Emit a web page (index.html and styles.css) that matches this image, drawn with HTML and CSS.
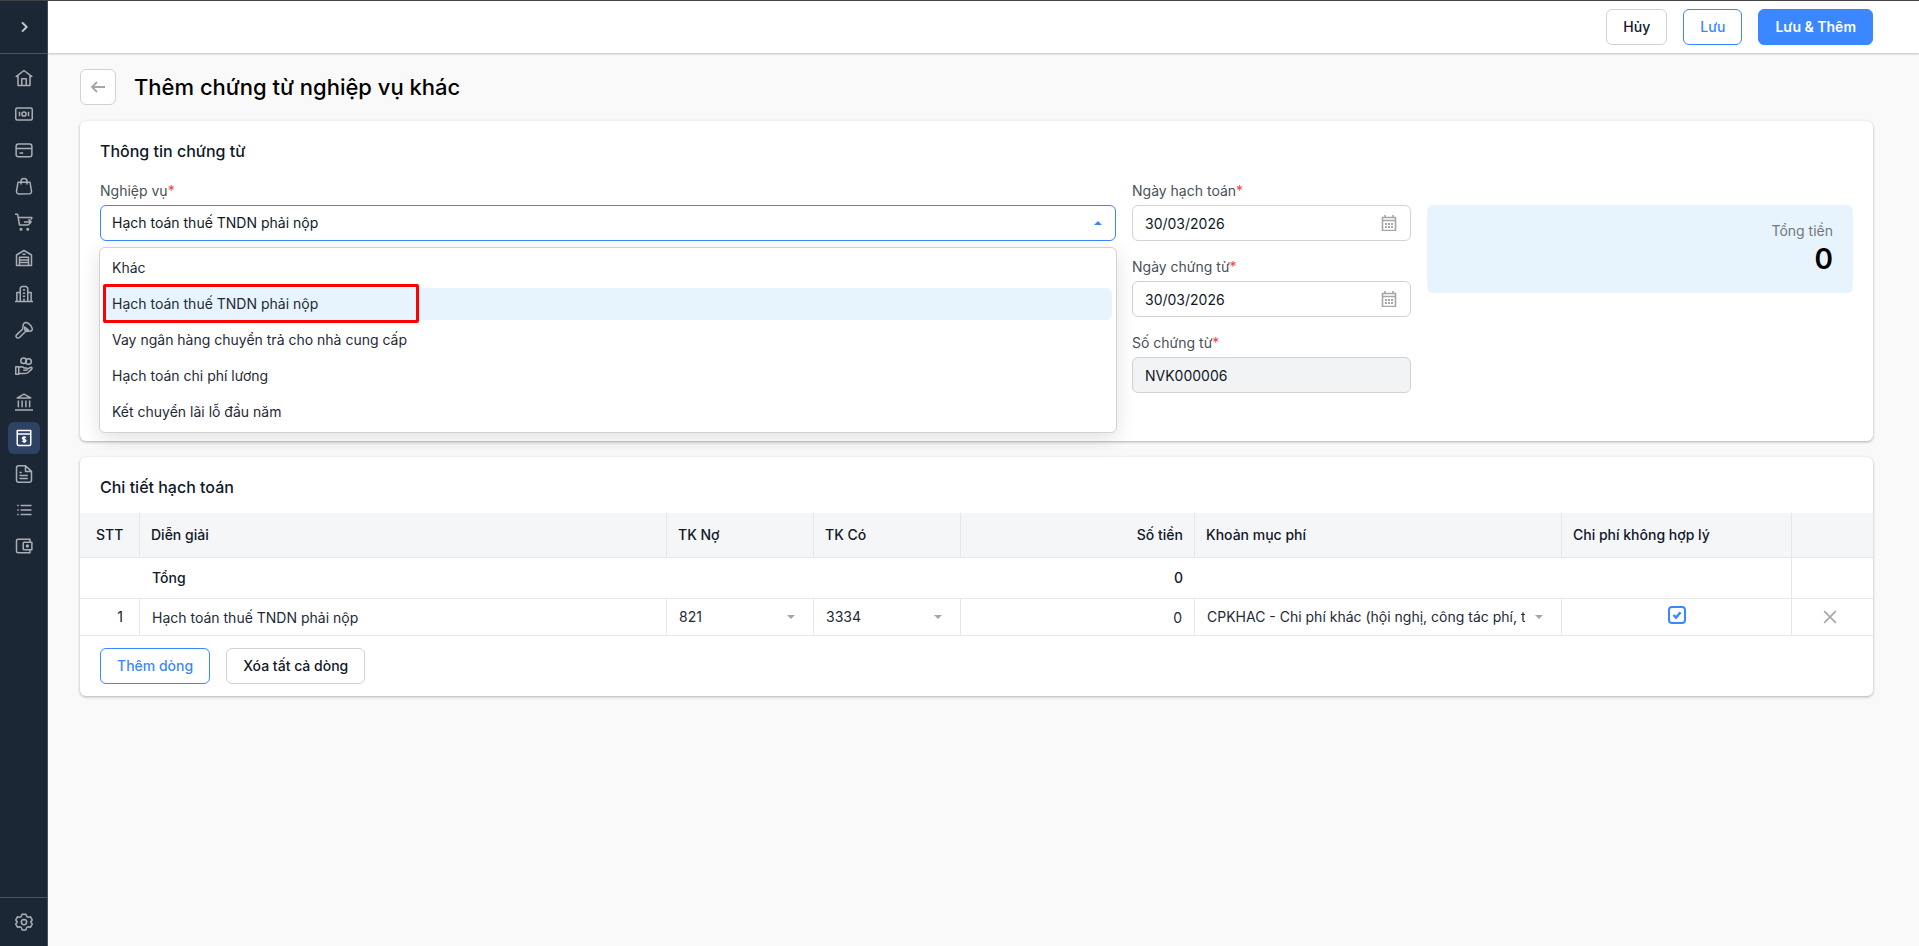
FILE: index.html
```
<!DOCTYPE html>
<html lang="vi">
<head>
  <meta charset="UTF-8">
  <title>Thêm chứng từ nghiệp vụ khác</title>
  <meta name="viewport" content="width=device-width, initial-scale=1.0">
  <link rel="stylesheet" href="styles.css">
</head>
<body>

<svg class="defs" aria-hidden="true">
  <symbol id="i-caret" viewBox="0 0 8 4"><path d="M0 0h8L4 4z" fill="currentColor"/></symbol>
  <symbol id="i-calendar" viewBox="0 0 16 16">
    <path d="M1.5 2.5h13v13h-13zM1.5 5.5h13" fill="none" stroke="currentColor" stroke-width="1.6"/>
    <path d="M4 0v3M12 0v3" stroke="currentColor" stroke-width="1.6"/>
    <path d="M4 8h2v2H4zM7 8h2v2H7zM10 8h2v2h-2zM4 11h2v2H4zM7 11h2v2H7zM10 11h2v2h-2z" fill="currentColor"/>
  </symbol>
</svg>

<aside class="sidebar">
  <button class="toggle" type="button" aria-label="Mở rộng menu">
    <svg class="icon" viewBox="0 0 24 24"><path d="M9 5l7 7-7 7" stroke-width="3"/></svg>
  </button>

  <nav class="nav">
    <a href="#" aria-label="Tổng quan"><svg class="icon" viewBox="0 0 24 24"><path d="M1 10.500L12 2l11 8.500M4 8.500V22h16V8.500M9 22v-9h6v9"/></svg></a>
    <a href="#" aria-label="Tiền mặt"><svg class="icon" viewBox="0 0 24 24"><rect x="1" y="4" width="22" height="16" rx="2"/><circle cx="12" cy="12" r="2.800"/><path d="M6 9v6M18 9v6"/></svg></a>
    <a href="#" aria-label="Ngân hàng"><svg class="icon" viewBox="0 0 24 24"><rect x="1.500" y="4" width="21" height="17" rx="3"/><path d="M2 10h20M6 16h5"/></svg></a>
    <a href="#" aria-label="Bán hàng"><svg class="icon" viewBox="0 0 24 24"><path d="M4 7h16l2 12a3 3 0 0 1-3 3.500H5A3 3 0 0 1 2 19zM8 10V6a4 4 0 0 1 8 0v4"/></svg></a>
    <a href="#" aria-label="Mua hàng"><svg class="icon" viewBox="0 0 24 24"><path d="M0 1.500h3.500L6 16h12M5 6h17.500l-1 3M12 12h9M18 8.500l3.500 3.500-3.500 3.500"/><circle cx="8" cy="21.500" r="1"/><circle cx="17" cy="21.500" r="1"/></svg></a>
    <a href="#" aria-label="Kho"><svg class="icon" viewBox="0 0 24 24"><path d="M2 22V8l10-6 10 6v14zM6 22V11h12v11M6 14.500h12M6 18h12M10 7h4"/></svg></a>
    <a href="#" aria-label="Doanh nghiệp"><svg class="icon" viewBox="0 0 24 24"><path d="M0 22h24M7 22V4l2-2h6l2 2v18M7 10H2.500v12M17 10h4.500v12M10.500 6.500h3M10.500 11h3M10.500 15h3M12 18v4"/></svg></a>
    <a href="#" aria-label="Công cụ dụng cụ"><svg class="icon" viewBox="0 0 24 24"><path d="M12 3c3-3 10 2 11 7 .5 2-1 3.500-3 3.500l-6 .5-8 8c-1 1-3 1-4 0s-1-2.500 0-3.500L10 11c1-2 0-6 2-8zM13 8v4h5z"/></svg></a>
    <a href="#" aria-label="Tiền lương"><svg class="icon" viewBox="0 0 24 24"><circle cx="11.500" cy="5" r="3.800"/><circle cx="18" cy="6" r="3.800"/><path d="M1 13h4v10H1zM5 14c3-1.500 5-1.500 7 .5h3c2 0 2 3 0 3h-4M15.500 16.500l5-2.500c2-1 3 1 1.500 2.500L17 21c-2 1.500-8 1-12 1"/></svg></a>
    <a href="#" aria-label="Thuế"><svg class="icon" viewBox="0 0 24 24"><path d="M3 6.500l9-5 9 5zM0 22.500h24M4.500 10v9M9.500 10v9M14.500 10v9M19.500 10v9"/></svg></a>
    <a href="#" class="active" aria-label="Tổng hợp"><svg class="icon" viewBox="0 0 24 24"><path d="M3 2h18v18a2 2 0 0 1-2 2H5a2 2 0 0 1-2-2zM3 6.500h18M14.500 11.500c-1.500-1-4.500-1-4.500.8 0 2 4.500 1 4.500 3.200 0 1.700-3 1.700-4.800.5M12 9.500v9"/></svg></a>
    <a href="#" aria-label="Báo cáo"><svg class="icon" viewBox="0 0 24 24"><path d="M14 1H5a3 3 0 0 0-3 3v16a3 3 0 0 0 3 3h14a3 3 0 0 0 3-3V8.500zM14 1v7.500h8M6 10h3M6 14h11M6 18h11"/></svg></a>
    <a href="#" aria-label="Danh mục"><svg class="icon" viewBox="0 0 24 24"><path d="M7.500 6H22M7.500 12H22M7.500 18H22M3 6h2M3 12h2M3 18h2"/></svg></a>
    <a href="#" aria-label="Ví"><svg class="icon" viewBox="0 0 24 24"><path d="M20 7V3H4a2 2 0 0 0-2 2v14a2 2 0 0 0 2 2h16v-4M12 7h10.500v10H12a1 1 0 0 1-1-1V8a1 1 0 0 1 1-1zM15.500 11h2v2h-2z"/></svg></a>
  </nav>

  <div class="nav-footer">
    <a href="#" aria-label="Thiết lập"><svg class="icon" viewBox="0 0 24 24"><circle cx="12" cy="12" r="3.500"/><path d="M9.500 1.500h5l1 3 2 1.200 3-.7 2.500 4.300L21 12l2 2.700-2.500 4.300-3-.7-2 1.200-1 3h-5l-1-3-2-1.200-3 .7L1 14.700 3 12 1 9.300 3.500 5l3 .7 2-1.200z"/></svg></a>
  </div>
</aside>

<div class="page">
  <header class="topbar">
    <button class="btn" type="button">Hủy</button>
    <button class="btn btn-outline" type="button">Lưu</button>
    <button class="btn btn-primary" type="submit" form="voucher">Lưu &amp; Thêm</button>
  </header>

  <main class="content">
    <div class="page-head">
      <button class="back" type="button" aria-label="Quay lại">
        <svg viewBox="0 0 16 16"><path d="M15 8H2M7 3L2 8l5 5"/></svg>
      </button>
      <h1>Thêm chứng từ nghiệp vụ khác</h1>
    </div>

    <section class="card info">
      <h2>Thông tin chứng từ</h2>
      <form id="voucher" class="form-grid">
        <div class="field">
          <label for="type">Nghiệp vụ<span class="req">*</span></label>
          <div class="control open">
            <select id="type">
              <option>Khác</option>
              <option selected>Hạch toán thuế TNDN phải nộp</option>
              <option>Vay ngân hàng chuyển trả cho nhà cung cấp</option>
              <option>Hạch toán chi phí lương</option>
              <option>Kết chuyển lãi lỗ đầu năm</option>
            </select>
            <svg class="caret"><use href="#i-caret"/></svg>
            <ul class="menu">
              <li>Khác</li>
              <li class="selected">Hạch toán thuế TNDN phải nộp</li>
              <li>Vay ngân hàng chuyển trả cho nhà cung cấp</li>
              <li>Hạch toán chi phí lương</li>
              <li>Kết chuyển lãi lỗ đầu năm</li>
            </ul>
          </div>
        </div>

        <div class="fields">
          <div class="field">
            <label for="posting-date">Ngày hạch toán<span class="req">*</span></label>
            <div class="control">
              <input type="text" id="posting-date" value="30/03/2026">
              <svg class="cal"><use href="#i-calendar"/></svg>
            </div>
          </div>
          <div class="field">
            <label for="voucher-date">Ngày chứng từ<span class="req">*</span></label>
            <div class="control">
              <input type="text" id="voucher-date" value="30/03/2026">
              <svg class="cal"><use href="#i-calendar"/></svg>
            </div>
          </div>
          <div class="field">
            <label for="voucher-no">Số chứng từ<span class="req">*</span></label>
            <div class="control">
              <input type="text" id="voucher-no" value="NVK000006" readonly>
            </div>
          </div>
        </div>

        <div class="summary">
          <span>Tổng tiền</span>
          <strong>0</strong>
        </div>
      </form>
    </section>

    <section class="card detail">
      <h2>Chi tiết hạch toán</h2>
      <table>
        <colgroup>
          <col class="c-no">
          <col class="c-desc">
          <col class="c-acc">
          <col class="c-acc">
          <col class="c-amount">
          <col class="c-item">
          <col class="c-check">
          <col class="c-del">
        </colgroup>
        <thead>
          <tr>
            <th class="no">STT</th>
            <th>Diễn giải</th>
            <th>TK Nợ</th>
            <th>TK Có</th>
            <th class="num">Số tiền</th>
            <th>Khoản mục phí</th>
            <th>Chi phí không hợp lý</th>
            <th></th>
          </tr>
        </thead>
        <tbody>
          <tr class="total">
            <td></td>
            <td>Tổng</td>
            <td></td>
            <td></td>
            <td class="num">0</td>
            <td></td>
            <td class="edge"></td>
            <td></td>
          </tr>
          <tr class="line">
            <td class="no">1</td>
            <td><input type="text" aria-label="Diễn giải" value="Hạch toán thuế TNDN phải nộp"></td>
            <td>
              <div class="control">
                <select aria-label="TK Nợ"><option>821</option></select>
                <svg class="caret"><use href="#i-caret"/></svg>
              </div>
            </td>
            <td>
              <div class="control">
                <select aria-label="TK Có"><option>3334</option></select>
                <svg class="caret"><use href="#i-caret"/></svg>
              </div>
            </td>
            <td><input type="text" class="num" aria-label="Số tiền" value="0"></td>
            <td>
              <div class="control">
                <select aria-label="Khoản mục phí"><option>CPKHAC - Chi phí khác (hội nghị, công tác phí, tiếp khách)</option></select>
                <svg class="caret"><use href="#i-caret"/></svg>
              </div>
            </td>
            <td>
              <label class="check">
                <input type="checkbox" aria-label="Chi phí không hợp lý" checked>
                <svg viewBox="0 0 18 18"><path d="M5.500 9l2.500 2.700 4.500-5.400"/></svg>
              </label>
            </td>
            <td>
              <button class="remove" type="button" aria-label="Xóa dòng">
                <svg viewBox="0 0 12 12"><path d="M1 1l10 10M11 1L1 11"/></svg>
              </button>
            </td>
          </tr>
        </tbody>
      </table>
      <div class="actions">
        <button class="btn btn-outline" type="button">Thêm dòng</button>
        <button class="btn" type="button">Xóa tất cả dòng</button>
      </div>
    </section>
  </main>
</div>

</body>
</html>
```
FILE: styles.css
```
*, *::after {
  box-sizing: border-box;
}
body {
  margin: 0;
  min-height: 100vh;
  display: flex;
  border-top: 1px solid #444;
  background: #f9f9f9;
  color: #111827;
  font-family: Inter, "Noto Sans", sans-serif;
  font-size: 14px;
  line-height: 20px;
}
h1, h2, ul {
  margin: 0;
  padding: 0;
}
button, input, select {
  font: inherit;
  color: inherit;
}
button {
  cursor: pointer;
}
.defs {
  display: none;
}

/* Sidebar */
.sidebar {
  width: 48px;
  flex: none;
  display: flex;
  flex-direction: column;
  background: #1c2736;
  border-right: 1px solid #465362;
}
.icon {
  width: 18px;
  height: 18px;
  overflow: visible;
  fill: none;
  stroke: currentColor;
  stroke-width: 2;
  stroke-linejoin: round;
}
.toggle {
  height: 53px;
  display: flex;
  align-items: center;
  justify-content: center;
  padding: 0;
  background: none;
  border: none;
  border-bottom: 1px solid #465362;
  color: #c4c8cd;
}
.toggle .icon {
  width: 16px;
  height: 16px;
}
.nav {
  flex: 1;
  display: flex;
  flex-direction: column;
  align-items: center;
  gap: 4px;
  padding-top: 8px;
}
.nav a, .nav-footer a {
  width: 32px;
  height: 32px;
  display: flex;
  align-items: center;
  justify-content: center;
  border-radius: 6px;
  color: #a9aeb5;
}
.nav a.active {
  background: #2f4264;
  color: #fff;
}
.nav-footer {
  height: 49px;
  display: flex;
  align-items: center;
  justify-content: center;
  border-top: 1px solid #465362;
}

/* Layout */
.page {
  flex: 1;
  min-width: 0;
}
.topbar {
  height: 52px;
  display: flex;
  align-items: center;
  justify-content: flex-end;
  gap: 16px;
  padding-right: 46px;
  background: #fff;
  box-shadow: 0 1px 2px rgba(0, 0, 0, 0.25);
}
.content {
  padding: 16px 46px 16px 32px;
}
.page-head {
  display: flex;
  align-items: center;
  gap: 18px;
  margin-bottom: 16px;
}
h1 {
  font-size: 22px;
  font-weight: 500;
  line-height: 28px;
  color: #000;
}
h2 {
  font-size: 16px;
  font-weight: 500;
  line-height: 20px;
}

/* Buttons */
.btn {
  height: 36px;
  padding: 0 16px;
  background: #fff;
  border: 1px solid #d2d2d4;
  border-radius: 6px;
  font-weight: 500;
}
.btn-outline {
  border-color: #3b87ff;
  color: #3b87ff;
}
.btn-primary {
  background: #3b87ff;
  border-color: #3b87ff;
  color: #fff;
  font-weight: 600;
}
.back {
  width: 36px;
  height: 36px;
  display: flex;
  align-items: center;
  justify-content: center;
  padding: 0;
  background: #fff;
  border: 1px solid #d2d2d4;
  border-radius: 6px;
}
.back svg {
  width: 16px;
  height: 16px;
  fill: none;
  stroke: #a3a6ab;
  stroke-width: 1.8;
}

/* Cards */
.card {
  background: #fff;
  border-radius: 6px;
  box-shadow: 0 1px 3px rgba(0, 0, 0, 0.3);
}
.info {
  padding: 20px 20px 48px;
  margin-bottom: 16px;
}
.form-grid {
  display: grid;
  grid-template-columns: minmax(0, 1fr) 279px 426px;
  align-items: start;
  gap: 16px;
  margin-top: 20px;
}
.fields {
  display: flex;
  flex-direction: column;
  gap: 16px;
}
.field label {
  display: block;
  margin-bottom: 4px;
  color: #4b5058;
}
.req {
  color: #ef4444;
}
.control {
  position: relative;
}
.field input, .field select {
  display: block;
  width: 100%;
  height: 36px;
  padding: 0 12px;
  background: #fff;
  border: 1px solid #d2d2d4;
  border-radius: 6px;
  outline: none;
}
.field input[readonly] {
  background: #f2f3f5;
}
select {
  appearance: none;
}
.field .open select {
  padding: 0 11px;
  border-color: #3b87ff;
}
.caret {
  position: absolute;
  right: 18px;
  top: calc(50% - 2px);
  width: 8px;
  height: 4px;
  color: #a3a6ab;
  pointer-events: none;
}
.open > .caret {
  right: 14px;
  color: #3b87ff;
  transform: rotate(180deg);
}
.cal {
  position: absolute;
  right: 14px;
  top: 10px;
  width: 16px;
  height: 16px;
  color: #a3a6ab;
}
.menu {
  position: absolute;
  z-index: 10;
  top: calc(100% + 6px);
  left: -1px;
  right: -1px;
  display: flex;
  flex-direction: column;
  gap: 4px;
  padding: 4px;
  list-style: none;
  background: #fff;
  border: 1px solid #d2d2d4;
  border-radius: 6px;
  box-shadow: 0 6px 20px rgba(0, 0, 0, 0.12);
}
.menu li {
  position: relative;
  padding: 6px 8px;
  border-radius: 6px;
  color: #1f2937;
}
.menu .selected {
  background: #e7f4fe;
}
.menu .selected::after {
  content: "";
  position: absolute;
  top: -4px;
  left: -1px;
  width: 316px;
  height: 39px;
  border: 3px solid #f00;
  border-radius: 2px;
}
.summary {
  margin-top: 24px;
  padding: 16px 20px;
  display: flex;
  flex-direction: column;
  align-items: flex-end;
  background: #e7f4fe;
  border-radius: 6px;
}
.summary span {
  color: #74777c;
}
.summary strong {
  font-size: 28px;
  font-weight: 600;
  line-height: 36px;
  color: #000;
}

/* Detail table */
.detail h2 {
  padding: 20px 20px 16px;
  box-sizing: content-box;
}
table {
  width: 100%;
  table-layout: fixed;
  border-collapse: separate;
  border-spacing: 0;
}
.c-no {
  width: 60px;
}
.c-acc {
  width: 147px;
}
.c-amount {
  width: 234px;
}
.c-item {
  width: 367px;
}
.c-check {
  width: 230px;
}
.c-del {
  width: 81px;
}
th, td {
  padding: 0 11px;
  border-bottom: 1px solid #e5e7e9;
  text-align: left;
}
th {
  height: 45px;
  background: #f4f6f8;
  font-weight: 500;
}
th:not(:last-child), .line td:not(:last-child), .total .edge {
  border-right: 1px solid #e5e7e9;
}
.total td {
  height: 41px;
  padding: 0 12px;
  font-weight: 500;
}
.line td {
  height: 37px;
  padding: 0;
}
th.no, .line td.no {
  padding: 0 16px;
  text-align: right;
}
.num, .total .num {
  text-align: right;
}
.line input[type="text"], .line select {
  display: block;
  width: 100%;
  height: 36px;
  padding: 0 12px;
  background: none;
  border: none;
  outline: none;
  color: #1f2937;
}
.line select {
  padding-right: 36px;
}
.check {
  display: flex;
  justify-content: center;
  width: 18px;
  height: 18px;
  margin: 0 auto 4px;
  position: relative;
}
.check input {
  appearance: none;
  width: 18px;
  height: 18px;
  margin: 0;
  border: 2px solid #3b87ff;
  border-radius: 4px;
}
.check svg {
  position: absolute;
  inset: 0;
  fill: none;
  stroke: #3b87ff;
  stroke-width: 2.5;
}
.line td:last-child {
  padding-right: 5px;
}
.remove {
  display: flex;
  margin: 0 auto;
  padding: 0;
  background: none;
  border: none;
}
.remove svg {
  width: 14px;
  height: 14px;
  fill: none;
  stroke: #a3a6ab;
  stroke-width: 1.4;
}
.actions {
  display: flex;
  gap: 16px;
  padding: 12px 20px;
}
```
